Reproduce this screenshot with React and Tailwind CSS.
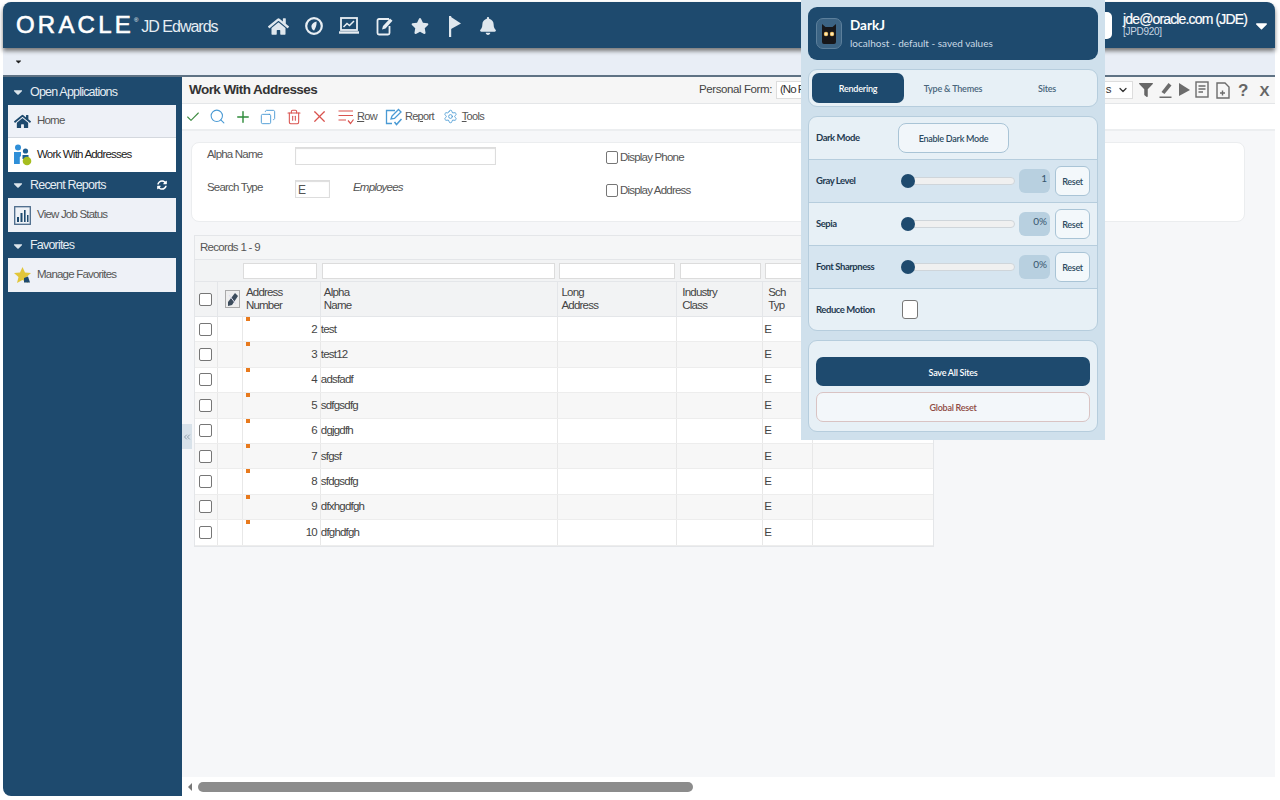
import React from 'react';
import { FaHome, FaStar, FaBell, FaCaretDown, FaFilter, FaSyncAlt } from 'react-icons/fa';
import { Check, Search, Plus, Copy, Trash2, X, Settings, ChevronDown, ChevronsLeft } from 'lucide-react';

const sans = 'font-["Liberation_Sans",Arial,sans-serif]';
const panelFont = 'font-["Lato","Noto_Sans",sans-serif]';

const rows = [
  ['2', 'test'],
  ['3', 'test12'],
  ['4', 'adsfadf'],
  ['5', 'sdfgsdfg'],
  ['6', 'dgjgdfh'],
  ['7', 'sfgsf'],
  ['8', 'sfdgsdfg'],
  ['9', 'dfxhgdfgh'],
  ['10', 'dfghdfgh'],
];

const ClockIcon = () => (
  <svg width="20" height="20" viewBox="0 0 20 20" fill="none">
    <circle cx="10" cy="10" r="7.8" stroke="#e8eef3" strokeWidth="2.2" />
    <path d="M12.5 5.5 C8.5 6.5 7.2 9 7.5 11 C7.8 13 9 14.4 10.2 14.5 C11 12.5 13 10 12.5 5.5 Z" fill="#e8eef3" />
  </svg>
);

const LaptopChartIcon = () => (
  <svg width="22" height="20" viewBox="0 0 22 20" fill="none">
    <rect x="3" y="2" width="16" height="12" stroke="#e8eef3" strokeWidth="1.8" />
    <path d="M5.5 11 L9 7.5 L11.5 9.5 L16 5" stroke="#e8eef3" strokeWidth="1.5" />
    <path d="M1 16.5 H21" stroke="#e8eef3" strokeWidth="2.4" />
  </svg>
);

const EditIcon = () => (
  <svg width="18" height="20" viewBox="0 0 18 20" fill="none">
    <path d="M13 3 H3 a1.5 1.5 0 0 0 -1.5 1.5 V17 a1.5 1.5 0 0 0 1.5 1.5 H12 a1.5 1.5 0 0 0 1.5 -1.5 V10" stroke="#e8eef3" strokeWidth="1.8" />
    <path d="M6 13.5 L7 10 L14 2.5 L16.5 4.8 L9.5 12.5 Z" fill="#e8eef3" />
  </svg>
);

const FlagIcon = () => (
  <svg width="14" height="22" viewBox="0 0 14 22" fill="#dfe7ee">
    <rect x="1" y="1" width="2.2" height="21" />
    <path d="M3 2 L13 8.5 L3 14 Z" />
  </svg>
);

const PeopleIcon = () => (
  <svg width="20" height="22" viewBox="0 0 20 22">
    <circle cx="5" cy="3.6" r="3" fill="#2f8fd8" />
    <path d="M1 8 h7 v4 l-1.2 1 V20 H1 Z" fill="#2f8fd8" />
    <circle cx="12.5" cy="7" r="2.6" fill="#1d5f93" />
    <path d="M9.5 11 h6 v4 h-6 Z" fill="#1d5f93" />
    <circle cx="14" cy="17" r="4.3" fill="#a6bd1f" />
  </svg>
);

const JobStatusIcon = () => (
  <svg width="17" height="19" viewBox="0 0 17 19" fill="none">
    <rect x="0.7" y="0.7" width="15.6" height="17.6" stroke="#4b6a8a" strokeWidth="1.3" fill="#eef2f7" />
    <path d="M3 11 h2 v5 h-2z M6.5 7 h2 v9 h-2z M10 4 h1.6 v12 h-1.6z M13 9 h1.5 v7 h-1.5z" fill="#1e4a6e" />
  </svg>
);

const FavIcon = () => (
  <svg width="17" height="17" viewBox="0 0 17 17">
    <path d="M8.5 0 L11 5.5 L17 6 L12.5 10 L14 16 L8.5 13 L3 16 L4.5 10 L0 6 L6 5.5 Z" fill="#e2c63a" />
    <path d="M10 11 l4 -1.5 l2 6 h-6 Z" fill="#1e4a6e" />
  </svg>
);

const DarkJLogo = () => (
  <svg width="16" height="22" viewBox="0 0 16 22">
    <path d="M1 1 L4.5 4 H11.5 L15 1 V19 a2 2 0 0 1 -2 2 H3 a2 2 0 0 1 -2 -2 Z" fill="#17171a" />
    <circle cx="5" cy="11" r="2.2" fill="#f2c66e" />
    <circle cx="11" cy="11" r="2.2" fill="#f2c66e" />
    <circle cx="5" cy="11" r="1" fill="#fff3d0" />
    <circle cx="11" cy="11" r="1" fill="#fff3d0" />
  </svg>
);

const RowIcon = () => (
  <svg width="16" height="16" viewBox="0 0 16 16" fill="none" stroke="#d9534f" strokeWidth="1.2">
    <path d="M0.5 2 H15 M0.5 6.5 H15 M0.5 11 H8" />
    <path d="M10 11.5 L12.5 14.5 L15.5 10.5" />
  </svg>
);

const ReportIcon = () => (
  <svg width="18" height="18" viewBox="0 0 18 18" fill="none" stroke="#4a9ad4" strokeWidth="1.3">
    <path d="M10 2.5 H1.5 V15.5 H7" />
    <path d="M6 11 L7 8 L13.5 1.5 L16 4 L9.5 10.5 Z" />
    <path d="M9.5 14 L11.5 16.5 L16.5 11" strokeWidth="1.5" />
  </svg>
);

const RecordIcon = () => (
  <div className="flex h-[18px] w-[15px] items-center justify-center border border-[#aaa] bg-[#eee]">
    <svg width="13" height="15" viewBox="0 0 13 15" fill="none">
      <path d="M9 1 L12 4 L6 13 L2 14 L2 10 Z" fill="#3c4c5c" />
      <path d="M3 3 L10 12" stroke="#dde" strokeWidth="1" />
    </svg>
  </div>
);

const GridBox = () => (
  <div className="h-[13px] w-[13px] rounded-[2px] border border-[#767676] bg-white" />
);

const SliderRow = ({ label, value, tinted }) => (
  <div className={`flex h-[43px] items-center border-t border-[#b6cddd] pl-[7px] ${tinted ? 'bg-[#d6e5f0]' : 'bg-[#e7f0f6]'}`}>
    <span className="w-[85px] pt-[1px] text-[9.5px] font-bold tracking-[-0.45px] text-[#1f3a50]">{label}</span>
    <div className="relative h-[8px] w-[114px] rounded-full border border-[#cfd5da] bg-[#f0f0f0]">
      <div className="absolute left-[-1px] top-[-4px] h-[14px] w-[14px] rounded-full bg-[#1e4a6e]" />
    </div>
    <div className="ml-[4px] flex h-[24px] w-[31px] justify-end rounded-[6px] bg-[#b8d0e0] pr-[3px] pt-[2px] text-[10px] text-[#36566e]">
      {value}
    </div>
    <button className="ml-[5px] h-[30px] w-[35px] rounded-[6px] border border-[#a9c4d6] bg-[#f3f8fb] pt-[1px] text-[9px] font-semibold tracking-[-0.3px] text-[#2c4a60]">
      Reset
    </button>
  </div>
);

const DarkJPanel = () => (
  <div className={`absolute left-[801px] top-0 z-10 flex h-[440px] w-[304px] flex-col gap-[9px] bg-[#cfe0ec] px-[7px] pt-[7px] ${panelFont}`}>
    <div className="flex h-[53px] items-center gap-[8px] rounded-[9px] bg-[#1e4a6e] pl-[8px]">
      <div className="flex h-[31px] w-[26px] items-center justify-center rounded-[7px] border border-[#5c7f9b] bg-[#3c6484]">
        <DarkJLogo />
      </div>
      <div>
        <div className="text-[13.5px] font-bold leading-[19px] text-white">DarkJ</div>
        <div className="text-[10px] leading-[16px] text-[#c9d9e5]">localhost - default - saved values</div>
      </div>
    </div>
    <div className="flex h-[38px] items-center rounded-[9px] border border-[#b6cddd] bg-[#e7f0f6] px-[3px]">
      <div className="flex h-[30px] w-[92px] items-center justify-center rounded-[7px] bg-[#1e4a6e] pt-[1px] text-[9px] font-semibold tracking-[-0.2px] text-white">Rendering</div>
      <div className="flex w-[98px] justify-center pt-[1px] text-[9px] font-semibold tracking-[-0.2px] text-[#48657b]">Type &amp; Themes</div>
      <div className="flex w-[90px] justify-center pt-[1px] text-[9px] font-semibold tracking-[-0.2px] text-[#48657b]">Sites</div>
    </div>
    <div className="overflow-hidden rounded-[9px] border border-[#b6cddd] bg-[#e7f0f6]">
      <div className="flex h-[42px] items-center pl-[7px]">
        <span className="w-[82px] pt-[1px] text-[9.5px] font-bold tracking-[-0.45px] text-[#1f3a50]">Dark Mode</span>
        <button className="h-[30px] w-[111px] rounded-[8px] border border-[#a9c4d6] bg-[#f1f6fa] pt-[1px] text-[9px] font-semibold tracking-[-0.25px] text-[#2c4a60]">
          Enable Dark Mode
        </button>
      </div>
      <SliderRow label="Gray Level" value="1" tinted />
      <SliderRow label="Sepia" value="0%" />
      <SliderRow label="Font Sharpness" value="0%" tinted />
      <div className="flex h-[42px] items-center border-t border-[#b6cddd] pl-[7px]">
        <span className="w-[86px] pt-[1px] text-[9.5px] font-bold tracking-[-0.45px] text-[#1f3a50]">Reduce Motion</span>
        <div className="h-[19px] w-[16px] rounded-[3px] border border-[#777] bg-white" />
      </div>
    </div>
    <div className="flex h-[92px] flex-col gap-[6px] rounded-[9px] border border-[#b6cddd] bg-[#e7f0f6] px-[7px] pt-[16px]">
      <button className="h-[29px] rounded-[7px] bg-[#1e4a6e] pt-[2px] text-[9px] font-semibold tracking-[-0.25px] text-white">Save All Sites</button>
      <button className="h-[30px] rounded-[7px] border border-[#d9c3c3] bg-[#f3f7fa] pt-[2px] text-[9px] font-semibold tracking-[-0.25px] text-[#8e4a42]">Global Reset</button>
    </div>
  </div>
);

const SideHeader = ({ label, height, refresh }) => (
  <div className={`flex items-center text-[12.5px] tracking-[-0.8px] text-[#e6edf3] ${height}`}>
    <FaCaretDown className="ml-[3px] w-[14px] text-[14px] text-[#dbe5ec]" />
    <span className="ml-[5px]">{label}</span>
    {refresh && <FaSyncAlt className="ml-auto mr-[10px] text-[10px] text-white" />}
  </div>
);

const Sidebar = () => (
  <aside className="flex w-[179px] shrink-0 flex-col rounded-bl-[8px] bg-[#1e4a6e] px-[5px] text-[11.5px] tracking-[-0.8px]">
    <SideHeader label="Open Applications" height="h-[28px] pt-[2px]" />
    <div className="mr-[1px] flex h-[33px] items-center gap-[6px] border-b border-[#d4d8de] bg-[#eef1f7] pl-[6px] text-[#555]">
      <FaHome className="text-[17px] text-[#1e4a6e]" />
      Home
    </div>
    <div className="mr-[1px] flex h-[34px] items-center gap-[4px] bg-white pl-[5px] text-[#222]">
      <PeopleIcon />
      Work With Addresses
    </div>
    <SideHeader label="Recent Reports" height="h-[26px]" refresh />
    <div className="mr-[1px] flex h-[34px] items-center gap-[6px] bg-[#eef1f7] pl-[6px] text-[#555]">
      <JobStatusIcon />
      View Job Status
    </div>
    <SideHeader label="Favorites" height="h-[26px] pt-[1px]" />
    <div className="mr-[1px] flex h-[34px] items-center gap-[6px] bg-[#eef1f7] pl-[6px] text-[#555]">
      <FavIcon />
      Manage Favorites
    </div>
  </aside>
);

const TitleBar = () => (
  <div className="flex h-[27px] items-center border-b border-[#e4e6e8] bg-[#f6f6f6] pl-[7px]">
    <span className="w-[128px] shrink-0 whitespace-nowrap text-[13.5px] font-bold tracking-[-0.55px] text-[#333]">Work With Addresses</span>
    <span className="ml-[382px] w-[72px] shrink-0 whitespace-nowrap text-[11.5px] tracking-[-0.4px] text-[#444]">Personal Form:</span>
    <div className="ml-[5px] flex h-[18px] w-[357px] shrink-0 items-center justify-between border border-[#ddd] bg-white pl-[3px] pr-[3px] text-[11.5px] tracking-[-0.6px] text-[#333]">
      <span className="tracking-[-1px]">(No P</span>
      <span className="flex items-center gap-[6px]">s<ChevronDown size={12} strokeWidth={2.5} /></span>
    </div>
    <div className="ml-[6px] flex items-center gap-[5px] text-[#666]">
      <FaFilter className="text-[14px]" />
      <svg width="15" height="16" viewBox="0 0 14 16" fill="#6c6c6c"><path d="M3 10 L10 1 L13 3.5 L6 12 Z" /><path d="M1 14.5 H13 V16 H1 Z" /></svg>
      <svg width="12" height="16" viewBox="0 0 12 16" fill="#6c6c6c"><path d="M1 1 L12 8 L1 14 Z" /></svg>
      <svg width="16" height="18" viewBox="0 0 16 18" fill="none" stroke="#6c6c6c" strokeWidth="1.4"><rect x="1" y="1" width="12" height="15" /><path d="M3.5 5 H10.5 M3.5 8 H10.5 M3.5 11 H8" /></svg>
      <svg width="14" height="17" viewBox="0 0 14 17" fill="none" stroke="#6c6c6c" strokeWidth="1.4"><path d="M1 1 H9 L13 5 V16 H1 Z" /><path d="M4 11 H9 M6.5 8.5 V13.5" /></svg>
      <span className="ml-[3px] text-[17px] font-bold leading-none">?</span>
      <span className="ml-[6px] text-[15px] font-bold leading-none">X</span>
    </div>
  </div>
);

const ToolBar = () => (
  <div className="flex h-[27px] items-center border-b-2 border-[#eceef0] bg-white pl-[3px] text-[11px] tracking-[-0.7px] text-[#555]">
    <Check size={16} strokeWidth={1.6} className="text-[#3d8b40]" />
    <Search size={17} strokeWidth={1.5} className="ml-[8px] text-[#4a9ad4]" />
    <Plus size={18} strokeWidth={1.9} className="ml-[8px] text-[#2e8b3a]" />
    <Copy size={16} strokeWidth={1.4} className="ml-[8px] -scale-x-100 text-[#4a9ad4]" />
    <Trash2 size={16} strokeWidth={1.6} className="ml-[10px] text-[#d9534f]" />
    <X size={19} strokeWidth={1.5} className="ml-[8px] text-[#d9534f]" />
    <span className="ml-[9px]"><RowIcon /></span>
    <span className="ml-[3px]"><u>R</u>ow</span>
    <span className="ml-[8px]"><ReportIcon /></span>
    <span className="ml-[2px]">Re<u>p</u>ort</span>
    <Settings size={15} strokeWidth={1.4} className="ml-[9px] text-[#4a9ad4]" />
    <span className="ml-[4px]"><u>T</u>ools</span>
  </div>
);

const SearchForm = () => (
  <div className="ml-[9px] mr-[30px] mt-[11px] flex h-[80px] rounded-[8px] border border-[#ebedef] bg-white text-[11.5px] tracking-[-0.8px] text-[#555]">
    <div className="w-[414px] pl-[15px] pt-[4px]">
      <div className="flex h-[18px] items-center">
        <span className="mb-[3px] w-[88px]">Alpha Name</span>
        <div className="h-[18px] w-[201px] border border-[#ddd] bg-white shadow-[inset_0_1px_1px_#ddd]" />
      </div>
      <div className="mt-[15px] flex h-[18px] items-center">
        <span className="mb-[3px] w-[88px]">Search Type</span>
        <div className="h-[18px] w-[35px] border border-[#ddd] pl-[2px] text-[12px] shadow-[inset_0_1px_1px_#ddd]">E</div>
        <span className="mb-[2px] ml-[23px] italic">Employees</span>
      </div>
    </div>
    <div className="pt-[7px]">
      <label className="flex h-[15px] items-center gap-[2px]"><span className="h-[13px] w-[12px] rounded-[2px] border border-[#767676]" />Display Phone</label>
      <label className="mt-[18px] flex h-[15px] items-center gap-[2px]"><span className="h-[13px] w-[12px] rounded-[2px] border border-[#767676]" />Display Address</label>
    </div>
  </div>
);

const cols = ['w-[23px]', 'w-[25px]', 'w-[78px]', 'w-[237px]', 'w-[120px]', 'w-[86px]', 'w-[50px]', 'w-[120px]'];
const filterInputs = ['w-[74px] mr-[5px]', 'w-[233px] mr-[4px]', 'w-[116px] mr-[5px]', 'w-[81px] mr-[4px]', 'w-[46px]'];

const ResultsGrid = () => (
  <div className="ml-[12px] mt-[13px] w-[740px] border border-[#e4e6e9] text-[11.5px] tracking-[-0.8px] text-[#444]">
    <div className="flex h-[23px] items-center bg-[#f5f6f7] pl-[5px] tracking-[-0.7px] text-[#555]">Records 1 - 9</div>
    <div className="flex h-[22px] items-center border-t border-[#e4e6e9] bg-[#f2f3f4]">
      <div className="w-[48px]" />
      {filterInputs.map(cls => (
        <div key={cls} className={`h-[16px] border border-[#dcdcdc] bg-white ${cls}`} />
      ))}
    </div>
    <div className="flex h-[36px] border-y border-[#e4e6e9] bg-[#f2f3f4] leading-[13px]">
      <div className={`${cols[0]} flex items-center justify-center border-r border-[#e4e6e9]`}><GridBox /></div>
      <div className={`${cols[1]} flex items-center pl-[7px]`}><RecordIcon /></div>
      <div className={`${cols[2]} border-r border-[#e4e6e9] pl-[3px] pt-[4px]`}>Address<br />Number</div>
      <div className={`${cols[3]} border-r border-[#e4e6e9] pl-[3px] pt-[4px]`}>Alpha<br />Name</div>
      <div className={`${cols[4]} border-r border-[#e4e6e9] pl-[4px] pt-[4px]`}>Long<br />Address</div>
      <div className={`${cols[5]} border-r border-[#e4e6e9] pl-[5px] pt-[4px]`}>Industry<br />Class</div>
      <div className={`${cols[6]} pl-[5px] pt-[4px]`}>Sch<br />Typ</div>
      <div className={cols[7]} />
    </div>
    {rows.map(([num, name], i) => (
      <div key={num} className={`flex h-[25.4px] items-center border-b border-[#ededed] ${i % 2 ? 'bg-[#f7f7f7]' : 'bg-white'}`}>
        <div className={`${cols[0]} flex h-full items-center justify-center border-r border-[#e8e8e8]`}><GridBox /></div>
        <div className={`${cols[1]} h-full border-r border-[#e8e8e8]`} />
        <div className={`${cols[2]} relative flex h-full items-center justify-end border-r border-[#e8e8e8] pr-[3px]`}>
          <span className="absolute left-[3px] top-0 h-[4px] w-[4px] bg-[#e87a1d]" />
          {num}
        </div>
        <div className={`${cols[3]} flex h-full items-center border-r border-[#e8e8e8]`}>{name}</div>
        <div className={`${cols[4]} h-full border-r border-[#e8e8e8]`} />
        <div className={`${cols[5]} h-full border-r border-[#e8e8e8]`} />
        <div className={`${cols[6]} flex h-full items-center border-r border-[#e8e8e8] pl-[1px]`}>E</div>
        <div className={cols[7]} />
      </div>
    ))}
  </div>
);

const App = () => (
  <div className={`relative flex h-[800px] w-[1280px] flex-col overflow-hidden bg-white pb-[4px] pl-[3px] pr-[5px] pt-[2px] ${sans}`}>
    <header className="z-[1] flex h-[46px] shrink-0 items-center rounded-t-[8px] bg-[#1e4a6e] shadow-[0_3px_4px_#777]">
      <span className="ml-[13px] text-[24px] font-normal leading-none tracking-[3.2px] text-white [-webkit-text-stroke:0.6px_white]">ORACLE</span>
      <span className="mb-[10px] text-[6px] text-white">®</span>
      <span className="ml-[3px] mt-[4px] text-[16px] tracking-[-1px] text-[#e6edf3]">JD Edwards</span>
      <div className="ml-[50px] mt-[2px] flex items-center">
        <FaHome className="text-[21px] text-[#dfe7ee]" />
        <span className="ml-[15px]"><ClockIcon /></span>
        <span className="ml-[14px]"><LaptopChartIcon /></span>
        <span className="ml-[16px]"><EditIcon /></span>
        <FaStar className="ml-[17px] text-[18px] text-[#dfe7ee]" />
        <span className="ml-[19px]"><FlagIcon /></span>
        <FaBell className="ml-[17px] text-[18px] text-[#dfe7ee]" />
      </div>
      <div className="ml-auto flex items-center">
        <div className="h-[27px] w-[12px] rounded-r-[5px] bg-white" />
        <div className="mb-[3px] ml-[11px] w-[124px] whitespace-nowrap text-white">
          <div className="text-[14px] leading-[15px] tracking-[-0.85px] [-webkit-text-stroke:0.2px_white]">jde@oracle.com (JDE)</div>
          <div className="text-[10px] leading-[9px] tracking-[-0.3px] text-[#c8d6e2]">[JPD920]</div>
        </div>
        <FaCaretDown className="ml-[5px] mr-[4px] text-[19px] text-white" />
      </div>
    </header>
    <div className="flex h-[29px] shrink-0 items-center border-b-2 border-[#5f7284] bg-[#e9eef6] pl-[11px]">
      <FaCaretDown className="text-[9px] text-[#222]" />
    </div>
    <div className="flex min-h-0 flex-1">
      <Sidebar />
      <main className="relative flex min-w-0 flex-1 flex-col bg-[#f6f7f9]">
        <TitleBar />
        <ToolBar />
        <SearchForm />
        <ResultsGrid />
        <div className="absolute left-0 top-[347px] flex h-[25px] w-[10px] items-center justify-center bg-[#d8e2ea]">
          <ChevronsLeft size={12} className="text-[#7d8f9e]" />
        </div>
        <div className="absolute bottom-0 left-0 right-0 flex h-[19px] items-center bg-white pl-[6px]">
          <div className="h-0 w-0 border-y-[4px] border-r-[4px] border-y-transparent border-r-[#777]" />
          <div className="ml-[6px] h-[10px] w-[495px] rounded-full bg-[#8c8c8c]" />
        </div>
      </main>
    </div>
    <DarkJPanel />
  </div>
);

export default App;
